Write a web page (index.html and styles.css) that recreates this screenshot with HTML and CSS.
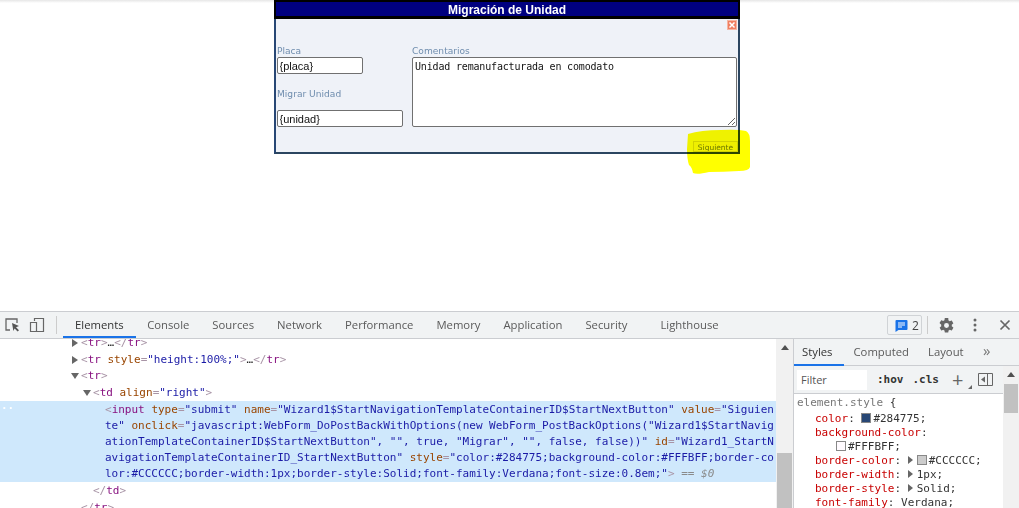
FILE: index.html
```html
<!DOCTYPE html>
<html lang="es">
<head>
<meta charset="utf-8">
<title>Migración de Unidad</title>
<link rel="stylesheet" href="styles.css">
</head>
<body>
<main class="page">
  <section class="dialog">
    <h1 class="dialog-title">Migración de Unidad</h1>
    <div class="dialog-close-row">
      <svg class="close-icon" width="10" height="10" viewBox="0 0 10 10"><rect x="0.5" y="0.5" width="9" height="9" fill="#ef7f62" stroke="#f6b5a2"/><path d="M2.500 2.500l5 5M7.500 2.500l-5 5" stroke="#fff" stroke-width="1.500"/></svg>
    </div>
    <form class="dialog-form">
      <div class="col-left">
        <label class="field-label">Placa</label>
        <input class="text-input placa" value="{placa}">
        <label class="field-label migrar">Migrar Unidad</label>
        <input class="text-input unidad" value="{unidad}">
      </div>
      <div class="col-right">
        <label class="field-label">Comentarios</label>
        <textarea class="comments">Unidad remanufacturada en comodato</textarea>
      </div>
    </form>
    <div class="dialog-actions"><input class="next-btn" type="button" value="Siguiente"></div>
    <svg class="highlight" width="64" height="47" viewBox="0 0 64 47"><path d="M1 5Q14 1 34 1Q50 0 59 2Q63 4 63 12L63 38Q62 42 52 42Q36 43 22 43Q10 46 6 44Q5 38 2 36Q0 30 0 20Z" fill="#ffff00"/></svg>
  </section>
</main>
<section class="devtools">
  <header class="toolbar">
    <svg class="tb-icon first" width="18" height="16" viewBox="0 0 18 16"><path d="M6 13H2V2h11v4" fill="none" stroke="#666" stroke-width="1.300"/><path d="M8 6l7 3-3 1.200 3 3-1.400 1.300-3-3L9.400 14z" fill="#555"/></svg>
    <svg class="tb-icon" width="16" height="16" viewBox="0 0 16 16"><path d="M5.500 4V1.500h9v13H6M1.500 5.500h6v9h-6z" fill="none" stroke="#666" stroke-width="1.200"/></svg>
    <span class="tb-sep"></span>
    <nav class="tabs">
      <span class="tab active">Elements</span>
      <span class="tab">Console</span>
      <span class="tab">Sources</span>
      <span class="tab">Network</span>
      <span class="tab">Performance</span>
      <span class="tab">Memory</span>
      <span class="tab">Application</span>
      <span class="tab">Security</span>
      <span class="tab lighthouse">Lighthouse</span>
    </nav>
    <div class="tb-right">
      <span class="badge">
        <svg width="13" height="13" viewBox="0 0 13 13"><path d="M1.500 1h10a1 1 0 0 1 1 1v8a1 1 0 0 1-1 1H3.500L.5 13V2a1 1 0 0 1 1-1z" fill="#1a73e8"/><path d="M3 4h7M3 6h7M3 8h4" stroke="#fff" stroke-width="1"/></svg>
        <span>2</span>
      </span>
      <span class="tb-sep small"></span>
      <svg class="gear" width="17" height="17" viewBox="0 0 24 24"><path fill="#666" d="M19.400 13c.05-.33.1-.66.1-1s-.05-.67-.1-1l2.100-1.650c.2-.15.25-.42.12-.64l-2-3.460c-.12-.22-.39-.3-.61-.22l-2.490 1c-.52-.4-1.080-.73-1.690-.98l-.38-2.650A.49.49 0 0 0 14 1.500h-4c-.25 0-.46.18-.49.42l-.38 2.650c-.61.25-1.170.59-1.690.98l-2.490-1c-.23-.09-.49 0-.61.22l-2 3.460c-.13.22-.07.49.12.64L4.600 11c-.05.33-.1.67-.1 1s.05.67.1 1l-2.100 1.650c-.19.15-.25.42-.12.64l2 3.460c.12.22.39.3.61.22l2.490-1c.52.4 1.080.73 1.690.98l.38 2.650c.03.24.24.42.49.42h4c.25 0 .46-.18.49-.42l.38-2.650c.61-.25 1.170-.59 1.690-.98l2.490 1c.23.09.49 0 .61-.22l2-3.460c.12-.22.07-.49-.12-.64L19.400 13zM12 15.500a3.500 3.500 0 1 1 0-7 3.500 3.500 0 0 1 0 7z"/></svg>
      <svg class="dots" width="4" height="14" viewBox="0 0 4 14"><circle cx="2" cy="2" r="1.500" fill="#666"/><circle cx="2" cy="7" r="1.500" fill="#666"/><circle cx="2" cy="12" r="1.500" fill="#666"/></svg>
      <svg class="x" width="12" height="12" viewBox="0 0 12 12"><path d="M1.500 1.500l9 9M10.500 1.500l-9 9" stroke="#666" stroke-width="1.700"/></svg>
    </div>
  </header>
  <div class="panels">
    <div class="elements">
      <div class="tree">
        <div class="row r1"><i class="tri right"></i><span class="br">&lt;</span><span class="tag">tr</span><span class="br">&gt;</span>…<span class="br">&lt;/</span><span class="tag">tr</span><span class="br">&gt;</span></div>
        <div class="row r1"><i class="tri right"></i><span class="br">&lt;</span><span class="tag">tr</span> <span class="an">style</span><span class="br">=</span><span class="av">"height:100%;"</span><span class="br">&gt;</span>…<span class="br">&lt;/</span><span class="tag">tr</span><span class="br">&gt;</span></div>
        <div class="row r1"><i class="tri down"></i><span class="br">&lt;</span><span class="tag">tr</span><span class="br">&gt;</span></div>
        <div class="row r2"><i class="tri down"></i><span class="br">&lt;</span><span class="tag">td</span> <span class="an">align</span><span class="br">=</span><span class="av">"right"</span><span class="br">&gt;</span></div>
        <div class="selected">
          <span class="sel-dots">··</span>
          <div class="sel-line"><span class="br">&lt;</span><span class="tag">input</span> <span class="an">type</span><span class="br">=</span><span class="av">"submit"</span> <span class="an">name</span><span class="br">=</span><span class="av">"Wizard1$StartNavigationTemplateContainerID$StartNextButton"</span> <span class="an">value</span><span class="br">=</span><span class="av">"Siguien</span></div>
          <div class="sel-line"><span class="av">te"</span> <span class="an">onclick</span><span class="br">=</span><span class="av">"javascript:WebForm_DoPostBackWithOptions(new WebForm_PostBackOptions("Wizard1$StartNavig</span></div>
          <div class="sel-line"><span class="av">ationTemplateContainerID$StartNextButton", "", true, "Migrar", "", false, false))"</span> <span class="an">id</span><span class="br">=</span><span class="av">"Wizard1_StartN</span></div>
          <div class="sel-line"><span class="av">avigationTemplateContainerID_StartNextButton"</span> <span class="an">style</span><span class="br">=</span><span class="av">"color:#284775;background-color:#FFFBFF;border-co</span></div>
          <div class="sel-line"><span class="av">lor:#CCCCCC;border-width:1px;border-style:Solid;font-family:Verdana;font-size:0.8em;"</span><span class="br">&gt;</span> <span class="eq">== <em>$0</em></span></div>
        </div>
        <div class="row r3"><span class="br">&lt;/</span><span class="tag">td</span><span class="br">&gt;</span></div>
        <div class="row r4"><span class="br">&lt;/</span><span class="tag">tr</span><span class="br">&gt;</span></div>
      </div>
    </div>
    <div class="scrollbar left-bar">
      <i class="up"></i>
      <span class="thumb"></span>
    </div>
    <aside class="sidebar">
      <div class="side-tabs">
        <span class="stab active">Styles</span>
        <span class="stab">Computed</span>
        <span class="stab">Layout</span>
        <span class="more">»</span>
      </div>
      <div class="side-body">
        <div class="side-main">
          <div class="filter-row">
            <span class="filter">Filter</span>
            <span class="fbtn hov">:hov</span>
            <span class="fbtn cls">.cls</span>
            <span class="plus">+<i class="corner"></i></span>
            <svg class="sidebar-toggle" width="15" height="13" viewBox="0 0 15 13"><path d="M.5.5h14v12H.5zM9.500.5v12" fill="none" stroke="#666"/><path d="M7 3.500v6L3 6.500z" fill="#666"/></svg>
          </div>
          <div class="rules">
            <div class="rule-sel">element.style <span class="brace">{</span></div>
            <div class="decl"><span class="pn">color</span>: <i class="swatch navy"></i>#284775;</div>
            <div class="decl"><span class="pn">background-color</span>:</div>
            <div class="decl indent"><i class="swatch white"></i>#FFFBFF;</div>
            <div class="decl"><span class="pn">border-color</span>: <i class="tri right small"></i><i class="swatch gray"></i>#CCCCCC;</div>
            <div class="decl"><span class="pn">border-width</span>: <i class="tri right small"></i>1px;</div>
            <div class="decl"><span class="pn">border-style</span>: <i class="tri right small"></i>Solid;</div>
            <div class="decl"><span class="pn">font-family</span>: Verdana;</div>
          </div>
        </div>
        <div class="scrollbar right-bar">
          <i class="up"></i>
          <span class="thumb"></span>
        </div>
      </div>
    </aside>
  </div>
</section>
</body>
</html>
```

FILE: styles.css
```css
* { box-sizing: border-box; }
html, body { margin: 0; height: 508px; overflow: hidden; background: #fff; }
body { display: flex; flex-direction: column; width: 1019px; }

.page {
  height: 311px;
  flex: none;
  padding-left: 274px;
  background: linear-gradient(#e6e6e6 0, #fff 3px);
}
.dialog {
  position: relative;
  width: 466px;
  height: 154px;
  background: #eff2f8;
  border: 2px solid #2b4560;
  border-top: 0;
  border-left-color: #284775;
}
.dialog-title {
  margin: 0 -2px 0 -2px;
  height: 19px;
  background: #000080;
  border: solid #000;
  border-width: 2px 2px 3px;
  color: #fff;
  font: bold 12px/17px "Liberation Sans", Arial, sans-serif;
  text-align: center;
}
.dialog-close-row { display: flex; justify-content: flex-end; padding: 1px 1px 0 0; height: 11px; }
.close-icon { display: block; }
.dialog-form { display: flex; gap: 9px; padding: 0 1px; margin-top: 14px; }
.col-left { width: 126px; display: flex; flex-direction: column; align-items: flex-start; }
.col-right { flex: 1; display: flex; flex-direction: column; }
.field-label {
  display: block;
  font: 9.100px/15px "DejaVu Sans", Verdana, sans-serif;
  color: #6f8dae;
  height: 13px;
}
.text-input, .comments {
  background: #fff;
  border: 1px solid #707070;
  border-radius: 2px;
  color: #111;
  margin: 0;
  outline: 0;
}
.text-input { height: 17px; padding: 0 1.500px; font: 11px/15px "Liberation Sans", Arial, sans-serif; }
.placa { width: 86px; }
.unidad { width: 126px; }
.migrar { margin-top: 13px; margin-bottom: 10px; }
.comments {
  width: 325px;
  height: 70px;
  padding: 2px;
  font: 10px/13px "DejaVu Sans Mono", monospace;
  letter-spacing: -0.170px;
  resize: both;
}
.dialog-actions { display: flex; justify-content: flex-end; margin-top: 14px; }
.next-btn {
  position: relative;
  z-index: 1;
  width: 45px;
  height: 11px;
  padding: 1px 0 0;
  margin: 0;
  color: #6b7500;
  background: #efef00;
  border: 1px solid #d2d200;
  font: 7.500px/9px "DejaVu Sans", Verdana, sans-serif;
}
.highlight {
  position: absolute;
  left: 411px;
  top: 129px;
  mix-blend-mode: multiply;
}

.devtools {
  flex: 1;
  display: flex;
  flex-direction: column;
  min-height: 0;
  font-family: "Open Sans", "Noto Sans", sans-serif;
  border-top: 1px solid #cbcdd1;
}
.toolbar {
  height: 27px;
  flex: none;
  display: flex;
  align-items: center;
  background: #f1f3f4;
  border-bottom: 1px solid #cbcdd1;
}
.tb-icon { display: block; }
.tb-icon.first { margin-left: 4px; margin-right: 7px; }
.tb-sep { width: 1px; height: 18px; background: #ccc; margin: 0 7px 0 11px; flex: none; }
.tabs { display: flex; height: 26px; align-items: stretch; }
.tab {
  font-size: 11.300px;
  line-height: 26px;
  color: #5a5a5a;
  padding: 0 11.500px;
  white-space: nowrap;
}
.tab.active { color: #333; box-shadow: inset 0 -2px 0 #1a73e8; margin-left: -1px; padding: 0 12px; }
.lighthouse { margin-left: 10px; }
.tb-right { margin-left: auto; display: flex; align-items: center; padding-right: 8px; }
.badge {
  display: flex;
  align-items: center;
  gap: 4px;
  height: 20px;
  width: 35px;
  padding-left: 7px;
  border: 1px solid #d0d3d6;
  border-radius: 2px;
  font-size: 12px;
  color: #444;
}
.tb-sep.small { margin: 0 10px 0 5px; }
.gear { margin-right: 18px; }
.dots { margin-right: 22px; }
.x { display: block; }

.panels { flex: 1; display: flex; min-height: 0; }
.elements {
  width: 776px;
  flex: none;
  overflow: hidden;
  background: #fff;
  font: 11px/16.200px "DejaVu Sans Mono", monospace;
  color: #222;
}
.tree { margin-top: -4px; }
.row { white-space: pre; height: 16.500px; position: relative; }
.r1 { padding-left: 81px; }
.r2 { padding-left: 93px; }
.r3 { padding-left: 93px; margin-top: 1px; }
.r4 { padding-left: 81px; }
.tri { display: inline-block; width: 0; height: 0; border-style: solid; position: absolute; }
.tri.right { left: 72px; top: 4px; border-width: 4px 0 4px 6px; border-color: transparent transparent transparent #666; }
.tri.down { top: 5px; border-width: 6px 4px 0; border-color: #666 transparent transparent; left: 71px; }
.r2 .tri.down { left: 83px; }
.br { color: #a894a6; }
.tag { color: #881280; }
.an { color: #994500; }
.av { color: #1a1aa6; }
.eq { color: #8a8a8a; }
.eq em { font-style: italic; }
.selected {
  position: relative;
  background: #cfe8fc;
  padding: 1px 0 0 105px;
  height: 81px;
}
.sel-line { white-space: pre; height: 16px; }
.sel-dots { position: absolute; left: 1px; top: 0; color: #fff; font-weight: bold; }

.scrollbar { background: #f1f1f1; position: relative; flex: none; }
.scrollbar .up {
  position: absolute;
  left: 5px;
  border-style: solid;
  border-width: 0 4px 5px;
  border-color: transparent transparent #505050;
}
.scrollbar .thumb { position: absolute; background: #c1c1c1; left: 1px; right: 1px; }
.left-bar { width: 17px; }
.left-bar .up { top: 6px; }
.left-bar .thumb { top: 114px; bottom: 0; }

.sidebar { flex: 1; min-width: 0; display: flex; flex-direction: column; border-left: 1px solid #cbcdd1; }
.side-tabs {
  height: 27px;
  flex: none;
  display: flex;
  background: #f1f3f4;
  border-bottom: 1px solid #cbcdd1;
  font-size: 11.300px;
  line-height: 26px;
  color: #5a5a5a;
}
.stab { padding: 0 9.500px; }
.stab.active { color: #333; box-shadow: 0 1px 0 0 #1a73e8, inset 0 -1px 0 #1a73e8; width: 50px; padding: 0 8px; }
.more { margin-left: 10px; font-size: 15px; line-height: 22px; color: #777; }
.side-body { flex: 1; display: flex; min-height: 0; }
.side-main { flex: 1; min-width: 0; overflow: hidden; }
.filter-row {
  height: 28px;
  display: flex;
  align-items: center;
  background: #f1f3f4;
  border-bottom: 1px solid #cbcdd1;
  padding-left: 3px;
  font: 11px/14px "DejaVu Sans Mono", monospace;
  position: relative;
}
.filter {
  width: 70px;
  height: 20px;
  background: #fff;
  padding-left: 4px;
  font: 11px/20px "Open Sans", sans-serif;
  color: #555;
}
.fbtn { color: #333; font-weight: bold; }
.hov { margin-left: 10px; }
.cls { margin-left: 9px; }
.plus { position: relative; margin-left: 13px; font: 20px/20px "Open Sans", sans-serif; color: #666; width: 18px; }
.corner { position: absolute; right: -2px; bottom: 1px; border-style: solid; border-width: 0 0 4px 4px; border-color: transparent transparent #666; }
.sidebar-toggle { position: absolute; left: 184px; top: 7px; }
.rules { padding: 2px 0 0 3px; font: 11px/14px "DejaVu Sans Mono", monospace; color: #333; }
.rule-sel { color: #777; height: 16px; }
.brace { color: #333; }
.decl { padding-left: 18px; height: 14px; white-space: pre; }
.decl.indent { padding-left: 39px; }
.pn { color: #c80000; }
.swatch {
  display: inline-block;
  width: 10px;
  height: 10px;
  border: 1px solid #888;
  vertical-align: -1px;
  margin-right: 2px;
}
.navy { background: #284775; }
.white { background: #fffbff; }
.gray { background: #ccc; }
.tri.small { position: static; border-width: 4px 0 4px 5px; margin-right: 4px; }
.right-bar { width: 16px; }
.right-bar .up { top: 6px; left: 4px; }
.right-bar .thumb { top: 18px; height: 29px; }
```
